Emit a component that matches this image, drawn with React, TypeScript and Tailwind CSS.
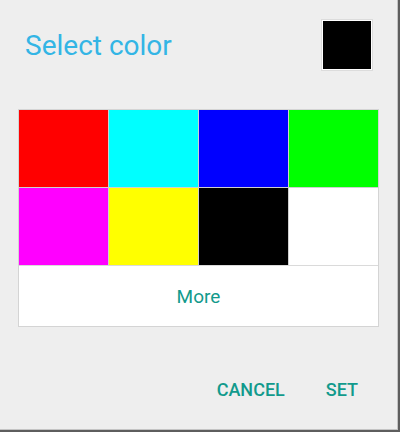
const swatches = ['#ff0000', '#00ffff', '#0000ff', '#00ff00', '#ff00ff', '#ffff00', '#000000', '#ffffff'];

export default function App() {
  return (
    <div className="w-[400px] h-[432px] bg-[#5e5e5e] font-['Roboto',sans-serif]">
      <div className="w-[398px] h-[430px] bg-[#eeeeee] border-r border-b border-[#c4c4c4] flex flex-col">
        <div className="flex justify-between pl-[25px] pr-[24px] pt-[19px] h-[109px] items-start">
          <h1 className="text-[28px] leading-[52px] text-[#33b5e5] mt-px">Select color</h1>
          <div className="w-[52px] h-[52px] border border-[#dcdcdc] bg-white p-px">
            <div className="w-full h-full bg-black" />
          </div>
        </div>
        <div className="mx-[18px] border border-[#d4d4d4] bg-white">
          <div className="grid grid-cols-4 gap-px bg-[#cfcfcf] border-b border-[#dadada]">
            {swatches.map((c) => (
              <div key={c} className="h-[77px]" style={{ backgroundColor: c }} />
            ))}
          </div>
          <button className="w-full h-[60px] text-[19px] text-[#129a8c] pt-[2px]">More</button>
        </div>
        <div className="flex justify-end items-center mt-[44px] pr-[23px] gap-[9px]">
          <button className="px-[16px] h-[36px] text-[18px] font-medium text-[#129a8c]">CANCEL</button>
          <button className="px-[16px] h-[36px] text-[18px] font-medium text-[#129a8c]">SET</button>
        </div>
      </div>
    </div>
  );
}
